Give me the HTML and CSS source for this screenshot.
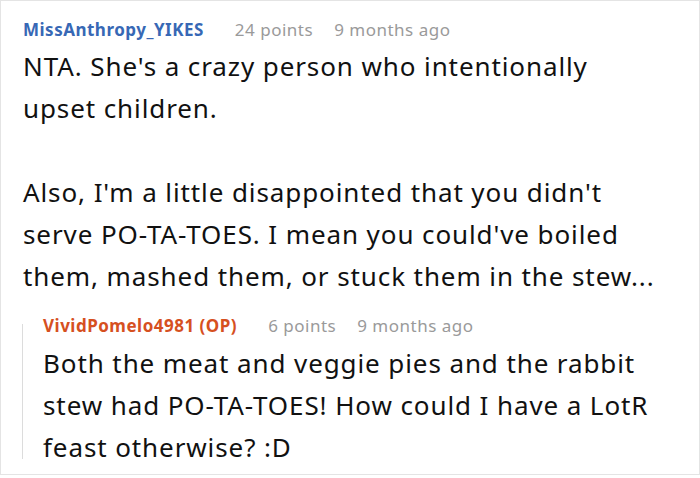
FILE: index.html
```html
<!DOCTYPE html>
<html lang="en">
<head>
<meta charset="utf-8">
<title>Comment</title>
<link rel="stylesheet" href="styles.css">
</head>
<body>
<div class="thread">
  <div class="comment">
    <div class="meta">
      <span class="author">MissAnthropy_YIKES</span>
      <span class="points">24 points</span>
      <span class="time">9 months ago</span>
    </div>
    <div class="body">NTA. She's a crazy person who intentionally upset children.<br><br>Also, I'm a little disappointed that you didn't serve PO-TA-TOES. I mean you could've boiled them, mashed them, or stuck them in the stew...</div>
  </div>
  <div class="reply">
    <div class="rail"></div>
    <div class="reply-content">
      <div class="meta">
        <span class="author op">VividPomelo4981 (OP)</span>
        <span class="points">6 points</span>
        <span class="time">9 months ago</span>
      </div>
      <div class="body">Both the meat and veggie pies and the rabbit stew had PO-TA-TOES! How could I have a LotR feast otherwise? :D</div>
    </div>
  </div>
</div>
</body>
</html>
```

FILE: styles.css
```css
html, body {
  margin: 0;
  padding: 0;
  background: #fff;
}

.thread {
  box-sizing: border-box;
  width: 700px;
  height: 475px;
  border: 1px solid #e4e4e4;
  font-family: "Noto Sans", "Open Sans", sans-serif;
  color: #111;
  overflow: hidden;
}

.comment {
  padding: 17px 40px 0 22px;
}

.meta {
  display: flex;
  align-items: baseline;
  font-size: 17px;
  letter-spacing: 0.5px;
  line-height: 24px;
  white-space: nowrap;
}

.author {
  font-weight: 700;
  color: #3768b5;
  margin-right: 31px;
}

.author.op {
  color: #d6501f;
}

.points {
  color: #9a9a9a;
  margin-right: 21px;
}

.time {
  color: #9a9a9a;
}

.body {
  font-size: 26px;
  letter-spacing: 0.9px;
  line-height: 42px;
  margin-top: 3px;
}

.reply {
  display: flex;
  margin: 17px 40px 0 21px;
}

.rail {
  width: 1px;
  background: #dcdcdc;
  margin: 10px 0 9px 0;
  flex: none;
}

.reply-content {
  padding-left: 20px;
}

.reply-content .body {
  margin-top: 4px;
}
```
